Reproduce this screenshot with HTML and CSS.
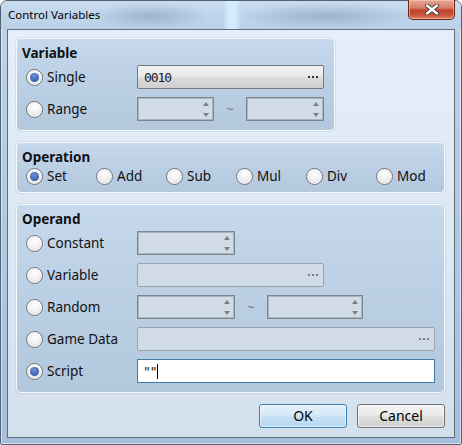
FILE: index.html
```html
<!DOCTYPE html>
<html>
    <head>
        <meta charset="UTF-8">
        <title>Control Variables</title>
        <link rel="stylesheet" href="styles.css">
    </head>
    <body>
        <div class="window">
            <div class="titlebar">
                <div class="title">Control Variables</div>
                <div class="closeBtn">
                    <svg width="14" height="11" viewBox="0 0 14 11">
                        <path d="M2 1.5 L12 9.5 M12 1.5 L2 9.5" stroke="#3a3a3a" stroke-width="4.2" stroke-linecap="round"/>
                        <path d="M2 1.5 L12 9.5 M12 1.5 L2 9.5" stroke="#ffffff" stroke-width="2.4" stroke-linecap="round"/>
                    </svg>
                </div>
            </div>

            <div class="client">
                <div class="group variableGroup">
                    <div class="legend">Variable</div>
                    <div class="row">
                        <label class="radio"><span class="radioMark checked"></span>Single</label>
                        <div class="picker active w187"><span class="code">0010</span><span class="dots"></span></div>
                    </div>
                    <div class="row">
                        <label class="radio"><span class="radioMark"></span>Range</label>
                        <div class="spin w77"><span class="arrows"></span></div>
                        <span class="tilde">~</span>
                        <div class="spin w78"><span class="arrows"></span></div>
                    </div>
                </div>

                <div class="group operationGroup">
                    <div class="legend">Operation</div>
                    <div class="opRow">
                        <label class="radio op"><span class="radioMark checked"></span>Set</label>
                        <label class="radio op"><span class="radioMark"></span>Add</label>
                        <label class="radio op"><span class="radioMark"></span>Sub</label>
                        <label class="radio op"><span class="radioMark"></span>Mul</label>
                        <label class="radio op"><span class="radioMark"></span>Div</label>
                        <label class="radio op"><span class="radioMark"></span>Mod</label>
                    </div>
                </div>

                <div class="group operandGroup">
                    <div class="legend">Operand</div>
                    <div class="row">
                        <label class="radio"><span class="radioMark"></span>Constant</label>
                        <div class="spin w98"><span class="arrows"></span></div>
                    </div>
                    <div class="row">
                        <label class="radio"><span class="radioMark"></span>Variable</label>
                        <div class="picker w187"><span class="dots"></span></div>
                    </div>
                    <div class="row">
                        <label class="radio"><span class="radioMark"></span>Random</label>
                        <div class="spin w98"><span class="arrows"></span></div>
                        <span class="tilde">~</span>
                        <div class="spin w96"><span class="arrows"></span></div>
                    </div>
                    <div class="row">
                        <label class="radio"><span class="radioMark"></span>Game Data</label>
                        <div class="picker w298"><span class="dots"></span></div>
                    </div>
                    <div class="row">
                        <label class="radio"><span class="radioMark checked"></span>Script</label>
                        <div class="textbox w298"><span class="code">""</span><span class="caret"></span></div>
                    </div>
                </div>

                <div class="buttons">
                    <div class="btn default">OK</div>
                    <div class="btn">Cancel</div>
                </div>
            </div>
        </div>
    </body>
</html>
```

FILE: styles.css
```css
html, body {
    margin: 0px;
    padding: 0px;
}

body {
    width: 462px;
    height: 445px;
    overflow: hidden;
    font-family: "Noto Sans", "Open Sans", sans-serif;
    font-size: 13.5px;
    color: #111;
}

/* window frame */

.window {
    box-sizing: border-box;
    width: 462px;
    height: 445px;
    border: 1px solid #53606e;
    border-radius: 7px 7px 2px 2px;
    background: linear-gradient(180deg, #bcd3ea 0%, #aec7e2 60%, #a4bedb 100%);
    box-shadow: inset 0 0 0 1px rgba(255, 255, 255, 0.55);
    display: flex;
    flex-direction: column;
}

.titlebar {
    height: 28px;
    display: flex;
    justify-content: space-between;
    align-items: flex-start;
    border-radius: 6px 6px 0 0;
    background-image:
        linear-gradient(90deg, rgba(214, 236, 255, 0) 222px, rgba(214, 236, 255, 0.95) 228px, rgba(214, 236, 255, 0.95) 234px, rgba(214, 236, 255, 0) 240px),
        radial-gradient(60px 13px at 150px 15px, rgba(110, 130, 155, 0.4), rgba(110, 130, 155, 0)),
        radial-gradient(90px 13px at 325px 15px, rgba(110, 130, 155, 0.42), rgba(110, 130, 155, 0)),
        linear-gradient(180deg, #c8dcf0 0px, #b9d0e8 28px);
}

.title {
    padding: 5px 0 0 7px;
    font-family: "Noto Sans", sans-serif;
    font-size: 11.5px;
    line-height: 18px;
    color: #000;
}

.closeBtn {
    box-sizing: border-box;
    width: 47px;
    height: 20px;
    margin: -1px 6px 0 0;
    border: 1px solid #6d2519;
    border-top: none;
    border-radius: 0 0 5px 5px;
    background: linear-gradient(180deg, #e7a896 0%, #d8806a 40%, #c2432c 55%, #c9543c 80%, #dd8a6f 100%);
    box-shadow: inset 0 0 0 1px rgba(255, 210, 200, 0.5);
    display: flex;
    justify-content: center;
    align-items: center;
}

.client {
    box-sizing: border-box;
    height: 409px;
    margin: 0 6px 0 6px;
    padding: 8px 9px 10px 8px;
    border: 1px solid #5f6e7e;
    background: linear-gradient(180deg, #e4effb 0%, #dde8f4 50%, #d4e0ec 100%);
    display: flex;
    flex-direction: column;
    gap: 11px;
}

/* group boxes */

.group {
    box-sizing: border-box;
    padding: 5px 9px 9px 9px;
    border: 1px solid #f6f9fd;
    border-radius: 5px;
    background: linear-gradient(180deg, #c5d8ec 0%, #b9cde3 60%, #b3c7dd 100%);
    box-shadow: 0 0 0 1px rgba(160, 180, 200, 0.25);
}

.variableGroup {
    width: 319px;
    height: 93px;
}

.operationGroup {
    height: 51px;
    padding-bottom: 7px;
}

.operandGroup {
    height: 189px;
}

.legend {
    font-weight: bold;
    line-height: 18px;
    margin: 0 0 3px -4px;
}

.operationGroup .legend {
    margin-bottom: 1px;
}

.row {
    display: flex;
    align-items: center;
    height: 24px;
    margin-bottom: 8px;
}

.row:last-child {
    margin-bottom: 0px;
}

.radio {
    display: flex;
    align-items: center;
    width: 111px;
    flex-shrink: 0;
    line-height: 18px;
}

.radioMark {
    box-sizing: border-box;
    width: 17px;
    height: 17px;
    margin-right: 4px;
    border: 1px solid #6f757c;
    border-radius: 50%;
    background: radial-gradient(circle at 50% 35%, #ffffff 0%, #f1f1f1 45%, #d3d6da 100%);
    box-shadow: inset 0 0 0 1px rgba(255, 255, 255, 0.7);
    display: flex;
    justify-content: center;
    align-items: center;
}

.radioMark.checked::after {
    content: "";
    width: 9px;
    height: 9px;
    border-radius: 50%;
    background: radial-gradient(circle at 45% 35%, #6f93d6 0%, #3f66b4 60%, #2f559f 100%);
}

.opRow {
    display: flex;
    height: 18px;
    align-items: center;
}

.radio.op {
    width: 70px;
}

/* input controls */

.picker, .spin, .textbox {
    box-sizing: border-box;
    height: 24px;
    flex-shrink: 0;
    display: flex;
    align-items: center;
}

.picker {
    justify-content: space-between;
    padding: 0 5px 0 6px;
    border: 1px solid #98a3ae;
    border-radius: 2px;
    background: #d0dbe6;
}

.picker.active {
    border-color: #75787c;
    background: linear-gradient(180deg, #f3f3f3 0%, #e9e9e9 45%, #dbdbdb 55%, #cfcfcf 100%);
}

.picker .dots {
    margin-left: auto;
    width: 10px;
    height: 2px;
    background: repeating-linear-gradient(90deg, #7a7f85 0px, #7a7f85 2px, transparent 2px, transparent 4px);
}

.picker.active .dots {
    background: repeating-linear-gradient(90deg, #333 0px, #333 2px, transparent 2px, transparent 4px);
}

.code {
    font-family: "DejaVu Sans Mono", monospace;
    font-size: 13px;
    letter-spacing: -1.1px;
    color: #1c1c1c;
}

.spin {
    justify-content: flex-end;
    border: 1px solid #7c868f;
    box-shadow: inset 0 0 0 1px #aab5c0;
    background: #d1dce7;
}

.arrows {
    display: flex;
    flex-direction: column;
    gap: 7px;
    margin-right: 4px;
}

.arrows::before, .arrows::after {
    content: "";
    width: 0px;
    height: 0px;
    border-left: 3.5px solid transparent;
    border-right: 3.5px solid transparent;
}

.arrows::before {
    border-bottom: 4px solid #7d8186;
}

.arrows::after {
    border-top: 4px solid #7d8186;
}

.tilde {
    width: 32px;
    text-align: center;
    color: #6b7480;
    font-size: 13px;
}

.textbox {
    padding-left: 5px;
    border: 1px solid #3d7bad;
    background: #ffffff;
}

.caret {
    width: 1px;
    height: 15px;
    margin-left: 1px;
    background: #000;
}

.w77 { width: 77px; }
.w78 { width: 78px; }
.w96 { width: 96px; }
.w98 { width: 98px; }
.w187 { width: 187px; }
.w298 { width: 298px; }

/* dialog buttons */

.buttons {
    display: flex;
    justify-content: flex-end;
    gap: 10px;
}

.btn {
    box-sizing: border-box;
    width: 88px;
    height: 24px;
    border: 1px solid #707070;
    border-radius: 3px;
    background: linear-gradient(180deg, #f2f2f2 0%, #ebebeb 45%, #dddddd 55%, #cfcfcf 100%);
    box-shadow: inset 0 0 0 1px rgba(255, 255, 255, 0.6);
    text-align: center;
    font-size: 14px;
    line-height: 22px;
    color: #000;
}

.btn.default {
    border-color: #3c7fb1;
    background: linear-gradient(180deg, #e5f1fb 0%, #d6e9f8 45%, #c4e0f6 55%, #b6d8f3 100%);
    box-shadow: inset 0 0 0 1px rgba(255, 255, 255, 0.5);
}
```
